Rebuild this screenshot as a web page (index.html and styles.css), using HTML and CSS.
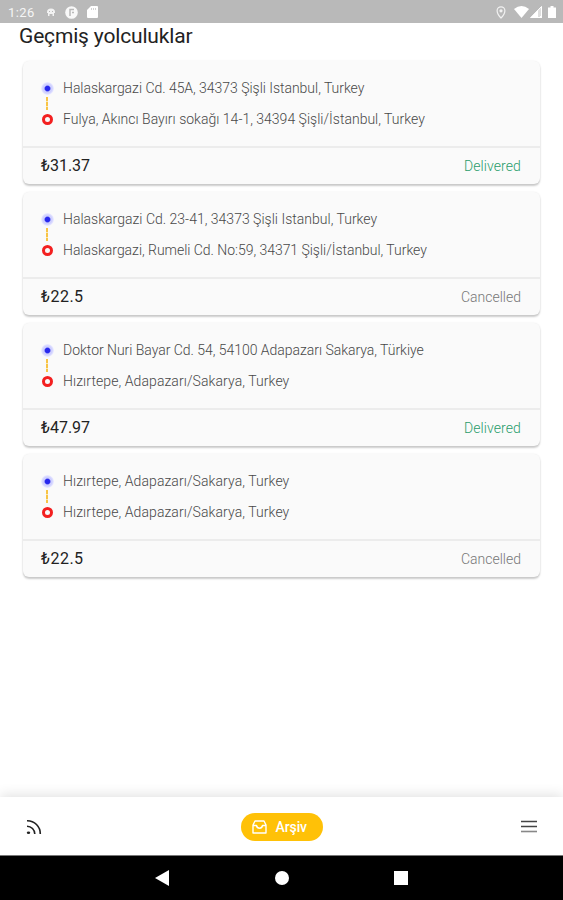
FILE: index.html
```html
<!DOCTYPE html>
<html lang="tr">
<head>
  <meta charset="UTF-8" />
  <meta name="viewport" content="width=device-width, initial-scale=1.0" />
  <title>Geçmiş yolculuklar</title>
  <link rel="stylesheet" href="styles.css">
</head>
<body>
  <header class="status-bar">
    <span class="clock">1:26</span>
    <svg class="icon-bug" width="10" height="10" viewBox="0 0 10 10"><path d="M1 5a4 3.500 0 0 1 8 0v1H8v3H6.500V7h-3v2H2V6H1z" fill="#f2f2f2"/><path d="M3 4.500h1M6 4.500h1" stroke="#b9b9b9"/></svg>
    <svg class="icon-app" width="13" height="13" viewBox="0 0 13 13"><circle cx="6.500" cy="6.500" r="6.300" fill="#f8f8f8"/><path d="M5 10V3.500h4M7 6.500h2" fill="none" stroke="#b9b9b9" stroke-width="1.500"/></svg>
    <svg class="icon-card" width="11" height="12" viewBox="0 0 11 12"><path d="M4 0h6a1 1 0 0 1 1 1v10a1 1 0 0 1-1 1H1a1 1 0 0 1-1-1V4z" fill="#fff"/><path d="M4.500 2v2M6.500 2v2M8.500 2v2" stroke="#c8c8c8" stroke-width=".8"/></svg>
    <div class="status-right">
      <svg class="icon-pin" width="10" height="13" viewBox="0 0 10 13"><path d="M5 .8a3.900 3.900 0 0 1 3.900 3.900C8.900 8 5 12 5 12S1.100 8 1.100 4.700A3.900 3.900 0 0 1 5 .8z" fill="none" stroke="#f2f2f2" stroke-width="1.200"/><circle cx="5" cy="4.800" r="1.600" fill="#f2f2f2"/></svg>
      <svg class="icon-wifi" width="15" height="12" viewBox="0 0 15 12"><path d="M0 3Q7.500-3 15 3L7.500 12z" fill="#fff"/></svg>
      <svg class="icon-signal" width="12" height="12" viewBox="0 0 12 12"><path d="M12 0v12H0z" fill="#dedede"/><path d="M8 4v8H0zM10 10h2v2h-2z" fill="#fff"/><path d="M11.500 .5v11H1z" fill="none" stroke="#fff"/></svg>
      <svg class="icon-battery" width="8" height="12" viewBox="0 0 8 12"><path d="M2.500 0h3v1.500H8V12H0V1.500h2.500z" fill="#fff"/></svg>
    </div>
  </header>

  <main>
    <h1>Geçmiş yolculuklar</h1>

    <article class="trip">
      <div class="route">
        <div class="stop from"><i class="marker"></i><span>Halaskargazi Cd. 45A, 34373 Şişli Istanbul, Turkey</span></div>
        <div class="stop to"><i class="marker"></i><span class="loose">Fulya, Akıncı Bayırı sokağı 14-1, 34394 Şişli/İstanbul, Turkey</span></div>
      </div>
      <div class="summary"><span class="price">₺31.37</span><span class="state delivered">Delivered</span></div>
    </article>

    <article class="trip">
      <div class="route">
        <div class="stop from"><i class="marker"></i><span class="loose">Halaskargazi Cd. 23-41, 34373 Şişli Istanbul, Turkey</span></div>
        <div class="stop to"><i class="marker"></i><span>Halaskargazi, Rumeli Cd. No:59, 34371 Şişli/İstanbul, Turkey</span></div>
      </div>
      <div class="summary"><span class="price short">₺22.5</span><span class="state">Cancelled</span></div>
    </article>

    <article class="trip">
      <div class="route">
        <div class="stop from"><i class="marker"></i><span>Doktor Nuri Bayar Cd. 54, 54100 Adapazarı Sakarya, Türkiye</span></div>
        <div class="stop to"><i class="marker"></i><span class="wide">Hızırtepe, Adapazarı/Sakarya, Turkey</span></div>
      </div>
      <div class="summary"><span class="price">₺47.97</span><span class="state delivered">Delivered</span></div>
    </article>

    <article class="trip">
      <div class="route">
        <div class="stop from"><i class="marker"></i><span class="wide">Hızırtepe, Adapazarı/Sakarya, Turkey</span></div>
        <div class="stop to"><i class="marker"></i><span class="wide">Hızırtepe, Adapazarı/Sakarya, Turkey</span></div>
      </div>
      <div class="summary"><span class="price short">₺22.5</span><span class="state">Cancelled</span></div>
    </article>
  </main>

  <nav class="tabs">
    <svg width="16" height="16" viewBox="0 0 16 16" fill="none" stroke="#222" stroke-width="1.600"><path d="M1 1.700A13 13 0 0 1 14.300 15M1 7.200A7.800 7.800 0 0 1 8.800 15"/><ellipse cx="2.500" cy="13.800" rx="1.700" ry="1.300" fill="#222" stroke="none"/></svg>
    <a class="archive">
      <svg width="15" height="14" viewBox="0 0 15 14" fill="none" stroke="#fff" stroke-width="1.400" stroke-linejoin="round"><path d="M1 5l2-4h9l2 4v8H1zM1 5.500h3.500q.5 2.700 3 2.700t3-2.700H14"/></svg>
      <span>Arşiv</span>
    </a>
    <svg width="16" height="13" viewBox="0 0 16 13" stroke-width="1.600"><path d="M0 1.500h16M0 6.500h16" stroke="#444"/><path d="M0 11.500h16" stroke="#888"/></svg>
  </nav>

  <footer class="system-nav">
    <svg width="14" height="16" viewBox="0 0 14 16"><path d="M0 8L14 0v16z" fill="#fff"/></svg>
    <i class="home"></i>
    <i class="recent"></i>
  </footer>
</body>
</html>
```
FILE: styles.css
```css
* {
  box-sizing: border-box;
}

body {
  margin: 0;
  height: 900px;
  display: flex;
  flex-direction: column;
  overflow: hidden;
  background: #fff;
  font-family: Roboto, "Noto Sans", sans-serif;
}

svg {
  display: block;
  flex: none;
}

.status-bar {
  height: 23px;
  padding: 1px 7px 0 8px;
  display: flex;
  align-items: center;
  background: #b9b9b9;
  color: #f5f5f5;
}

.clock {
  width: 38px;
  font-size: 13px;
  letter-spacing: 0.4px;
}

.icon-app {
  margin-left: 9px;
}

.icon-card {
  margin-left: 9px;
}

.status-right {
  margin-left: auto;
  display: flex;
  align-items: center;
}

.icon-wifi {
  margin-left: 8px;
}

.icon-signal {
  margin-left: 1px;
}

.icon-battery {
  margin-left: 6px;
}

main {
  flex: 1;
  padding: 0 23px;
}

h1 {
  height: 38px;
  margin: 0 0 0 -4px;
  font-size: 21px;
  font-weight: 400;
  line-height: 26px;
  letter-spacing: -0.17px;
  color: #222;
}

.trip {
  height: 123px;
  margin-bottom: 8px;
  border-radius: 6px;
  background: #fafafa;
  box-shadow: 0 2px 2px rgba(0, 0, 0, 0.2), 0 0 2px rgba(0, 0, 0, 0.08);
}

.route {
  height: 87px;
  padding: 12px 18px 0;
  border-bottom: 2px solid #ececec;
}

.stop {
  height: 31px;
  display: flex;
  align-items: center;
  font-size: 14px;
  font-weight: 300;
  letter-spacing: -0.03px;
  color: #484848;
  white-space: nowrap;
}

.stop span {
  margin-left: 9px;
  padding-bottom: 1px;
}

.stop .loose {
  letter-spacing: 0.01px;
}

.stop .wide {
  letter-spacing: 0.08px;
}

.marker {
  position: relative;
  width: 13px;
  height: 13px;
  border-radius: 50%;
}

.from .marker {
  background: radial-gradient(circle, #2727ed 0 2.2px, #cfd0ff 3.5px 4.5px, #eef 6.5px);
}

/* dashed link down to the destination */
.from .marker::after {
  content: "";
  position: absolute;
  left: 5px;
  top: 15px;
  width: 2px;
  height: 13px;
  background: repeating-linear-gradient(#f8c445 0 4px, #fbe8b5 4px 5px);
}

.to .marker {
  width: 11px;
  height: 11px;
  margin: 0 1px;
  border: 3px solid #f32020;
}

.summary {
  height: 36px;
  padding: 0 19px 1px 18px;
  display: flex;
  align-items: center;
  justify-content: space-between;
}

.price {
  font-size: 16px;
  color: #222;
}

.price.short {
  letter-spacing: 0.5px;
}

.state {
  font-size: 14px;
  font-weight: 300;
  color: #777;
}

.delivered {
  letter-spacing: 0.1px;
  color: #299d6b;
}

.tabs {
  height: 58px;
  padding: 1px 26px 0;
  display: flex;
  align-items: center;
  justify-content: space-between;
  background: #fff;
  box-shadow: 0 -2px 12px rgba(0, 0, 0, 0.12);
}

.archive {
  width: 82px;
  height: 28px;
  padding-left: 11px;
  display: flex;
  align-items: center;
  gap: 9px;
  border-radius: 14px;
  background: #ffc107;
  color: #fff;
  font-size: 14px;
  font-weight: 500;
  letter-spacing: -0.1px;
}

.system-nav {
  height: 45px;
  border-top: 1px solid #777;
  display: flex;
  align-items: center;
  justify-content: center;
  background: #000;
}

.home {
  width: 14px;
  height: 14px;
  margin: 0 105px 0 106px;
  border-radius: 50%;
  background: #fff;
}

.recent {
  width: 14px;
  height: 14px;
  background: #fff;
}
```
